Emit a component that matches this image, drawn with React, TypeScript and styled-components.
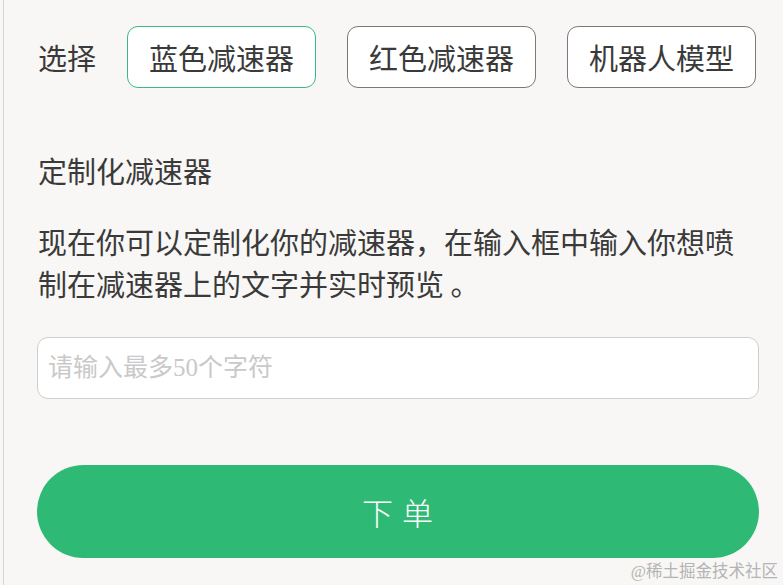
import React from "react";
import styled, { createGlobalStyle, css } from "styled-components";

const GlobalStyle = createGlobalStyle`
  html, body {
    margin: 0;
    padding: 0;
    background: #f8f7f5;
  }
  body {
    font-family: "Noto Sans CJK SC", "Noto Sans", sans-serif;
    color: #3a3a3a;
  }
`;

const Page = styled.div`
  position: relative;
  width: 783px;
  height: 585px;
  padding-left: 3px;
  box-sizing: border-box;
  overflow: hidden;
`;

const Panel = styled.main`
  height: 100%;
  border-left: 1px solid #d6d6d6;
  box-sizing: border-box;
  padding: 26px 24px 0 33px;
  display: flex;
  flex-direction: column;
`;

const SelectRow = styled.div`
  display: flex;
  align-items: center;
  gap: 31px;
  height: 62px;
`;

const Label = styled.span`
  font-size: 29px;
  line-height: 62px;
  padding-left: 1px;
`;

const Choice = styled.button<{ $active?: boolean }>`
  width: 189px;
  height: 62px;
  box-sizing: border-box;
  background: #fff;
  border: 1px solid #7a7a7a;
  border-radius: 11px;
  font-family: "Noto Sans CJK SC", sans-serif;
  font-size: 29px;
  color: #3a3a3a;
  padding: 0;
  display: flex;
  align-items: center;
  justify-content: center;
  ${(p) =>
    p.$active &&
    css`
      border-color: #3cb68c;
    `}
`;

const Heading = styled.h2`
  margin: 61px 0 0 1px;
  font-size: 29px;
  font-weight: 400;
  line-height: 42px;
`;

const Intro = styled.p`
  margin: 29px 0 0 1px;
  font-size: 29px;
  line-height: 42px;
`;

const TextInput = styled.input`
  margin-top: 33px;
  height: 62px;
  width: 100%;
  box-sizing: border-box;
  border: 1px solid #cfcfcf;
  border-radius: 11px;
  background: #fff;
  padding: 0 10px;
  font-family: "Liberation Serif", "Noto Sans CJK SC", serif;
  font-size: 25px;
  outline: none;
  &::placeholder {
    color: #c9c9c9;
  }
`;

const OrderButton = styled.button`
  margin-top: 66px;
  height: 93px;
  width: 100%;
  border: none;
  border-radius: 47px;
  background: #2eba75;
  color: #fff;
  font-family: "Noto Sans CJK SC", sans-serif;
  font-size: 31px;
  font-weight: 300;
  letter-spacing: 1px;
`;

const Watermark = styled.span`
  position: absolute;
  right: 5px;
  bottom: 3px;
  font-family: "Liberation Serif", "Noto Sans CJK SC", serif;
  font-size: 16.5px;
  color: #b4b4b4;
`;

export default function App() {
  return (
    <Page>
      <GlobalStyle />
      <Panel>
        <SelectRow>
          <Label>选择</Label>
          <Choice $active>蓝色减速器</Choice>
          <Choice>红色减速器</Choice>
          <Choice>机器人模型</Choice>
        </SelectRow>
        <Heading>定制化减速器</Heading>
        <Intro>
          现在你可以定制化你的减速器，在输入框中输入你想喷制在减速器上的文字并实时预览 。
        </Intro>
        <TextInput placeholder="请输入最多50个字符" />
        <OrderButton>下 单</OrderButton>
      </Panel>
      <Watermark>@稀土掘金技术社区</Watermark>
    </Page>
  );
}
